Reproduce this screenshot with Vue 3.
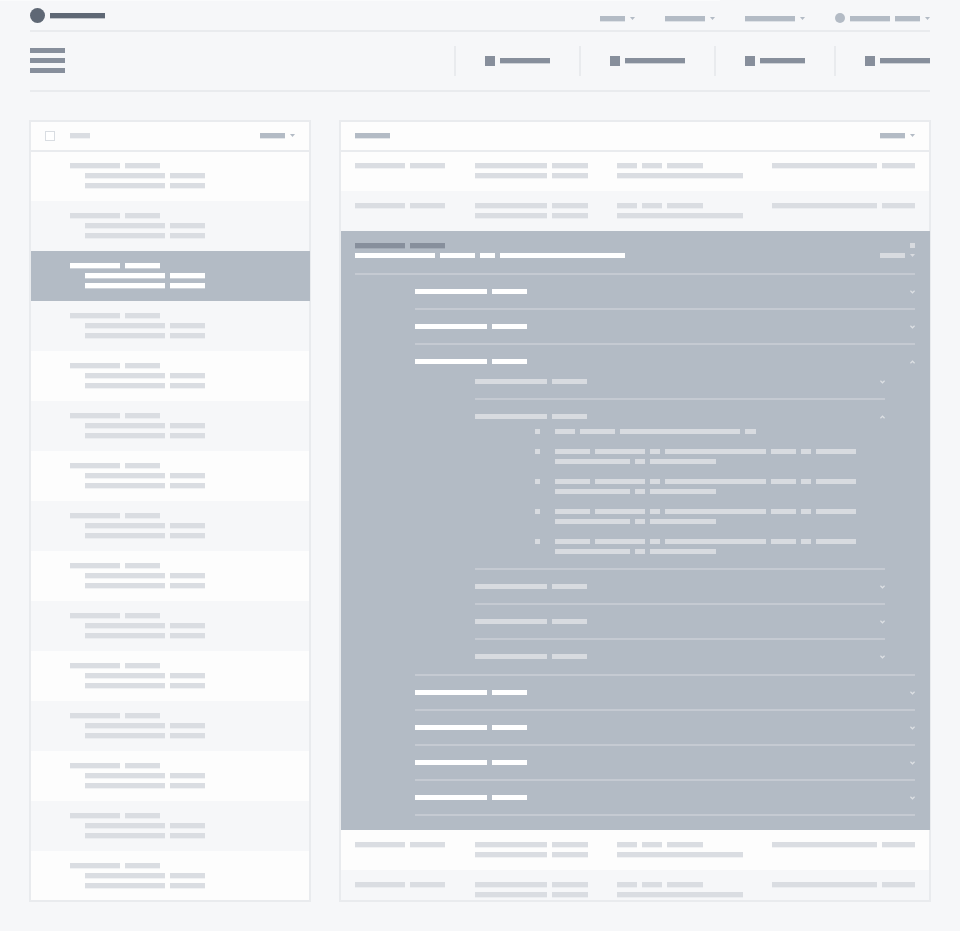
<script setup>
const topMenus = [[25], [40], [50]]
const navItems = [50, 60, 45, 50]
const leftRows = Array.from({ length: 15 }, (_, i) => i)
const tableCols = [
  [[50.33, 35]],
  [[72, 35.33], [72, 35.33]],
  [[20, 20, 35.33], [125.33]],
  [[105, 32.67]]
]
const level2 = Array.from({ length: 7 }, (_, i) => i)
const level3 = [0, 1, 2, 3, 4]
const bulletLines = [
  [[20.33, 35, 120, 10.33]],
  [[35.33, 50, 10, 100.33, 25, 10, 40], [75.33, 10, 65.33]],
  [[35.33, 50, 10, 100.33, 25, 10, 40], [75.33, 10, 65.33]],
  [[35.33, 50, 10, 100.33, 25, 10, 40], [75.33, 10, 65.33]],
  [[35.33, 50, 10, 100.33, 25, 10, 40], [75.33, 10, 65.33]]
]
</script>

<template>
  <div class="page">
    <div class="progress"></div>

    <header class="top">
      <div class="brand">
        <span class="logo"></span>
        <span class="bar dark brand-name"></span>
      </div>
      <div class="menus">
        <div v-for="(m, i) in topMenus" :key="i" class="menu">
          <span class="bar mid" :style="{ width: m[0] + 'px' }"></span>
          <svg class="caret" width="5" height="3" viewBox="0 0 5 3"><polygon points="0,0 5,0 2.5,3" /></svg>
        </div>
        <div class="menu user">
          <span class="avatar"></span>
          <span class="bar mid w40"></span>
          <span class="bar mid w25"></span>
          <svg class="caret" width="5" height="3" viewBox="0 0 5 3"><polygon points="0,0 5,0 2.5,3" /></svg>
        </div>
      </div>
    </header>

    <nav class="nav">
      <div class="burger">
        <span></span><span></span><span></span>
      </div>
      <div class="nav-items">
        <div v-for="(w, i) in navItems" :key="i" class="nav-item">
          <span class="square"></span>
          <span class="bar steel" :style="{ width: w + 'px' }"></span>
        </div>
      </div>
    </nav>

    <main class="panels">
      <section class="panel left">
        <div class="panel-head">
          <div class="head-side">
            <span class="checkbox"></span>
            <span class="bar light w20 ml15"></span>
          </div>
          <div class="head-sort">
            <span class="bar mid w25"></span>
            <svg class="caret" width="5" height="3" viewBox="0 0 5 3"><polygon points="0,0 5,0 2.5,3" /></svg>
          </div>
        </div>
        <div class="rows">
          <div
            v-for="r in leftRows"
            :key="r"
            class="left-row"
            :class="{ alt: r % 2 === 1, selected: r === 2 }"
          >
            <div class="line">
              <span class="bar tint w50"></span>
              <span class="bar tint w35"></span>
            </div>
            <div class="line indent">
              <span class="bar tint w80"></span>
              <span class="bar tint w35"></span>
            </div>
            <div class="line indent">
              <span class="bar tint w80"></span>
              <span class="bar tint w35"></span>
            </div>
          </div>
        </div>
      </section>

      <section class="panel right">
        <div class="panel-head">
          <span class="bar mid w35"></span>
          <div class="head-sort">
            <span class="bar mid w25"></span>
            <svg class="caret" width="5" height="3" viewBox="0 0 5 3"><polygon points="0,0 5,0 2.5,3" /></svg>
          </div>
        </div>
        <div class="rows">
          <div v-for="n in 2" :key="'a' + n" class="table-row" :class="{ alt: n === 2 }">
            <div v-for="(col, c) in tableCols" :key="c" class="cell">
              <div v-for="(line, l) in col" :key="l" class="line">
                <span v-for="(w, b) in line" :key="b" class="bar tint" :style="{ width: w + 'px' }"></span>
              </div>
            </div>
          </div>

          <div class="detail">
            <div class="detail-head">
              <div class="detail-title">
                <div class="line">
                  <span class="bar steel w50"></span>
                  <span class="bar steel w35"></span>
                </div>
                <div class="line">
                  <span class="flat white w80"></span>
                  <span class="flat white w35"></span>
                  <span class="flat white w15"></span>
                  <span class="flat white w125"></span>
                </div>
              </div>
              <div class="detail-side">
                <span class="flat pale dot"></span>
                <div class="head-sort">
                  <span class="flat pale w25"></span>
                  <svg class="caret pale-caret" width="5" height="3" viewBox="0 0 5 3"><polygon points="0,0 5,0 2.5,3" /></svg>
                </div>
              </div>
            </div>

            <div v-for="a in level2" :key="a" class="l2">
              <div class="acc-title">
                <span class="flat white w72"></span>
                <span class="flat white w35"></span>
                <svg class="chev" :class="{ up: a === 2 }" width="5" height="4" viewBox="0 0 5 4">
                  <polyline points="0.4,0.8 2.5,2.8 4.6,0.8" />
                </svg>
              </div>

              <div v-if="a === 2" class="l3-list">
                <div v-for="b in level3" :key="b" class="l3">
                  <div class="acc-title">
                    <span class="flat pale w72"></span>
                    <span class="flat pale w35"></span>
                    <svg class="chev" :class="{ up: b === 1 }" width="5" height="4" viewBox="0 0 5 4">
                      <polyline points="0.4,0.8 2.5,2.8 4.6,0.8" />
                    </svg>
                  </div>
                  <div v-if="b === 1" class="bullets">
                    <div v-for="(lines, k) in bulletLines" :key="k" class="bullet">
                      <span class="flat pale dot"></span>
                      <div class="bullet-body">
                        <div v-for="(line, l) in lines" :key="l" class="line">
                          <span v-for="(w, j) in line" :key="j" class="flat pale" :style="{ width: w + 'px' }"></span>
                        </div>
                      </div>
                    </div>
                  </div>
                </div>
              </div>
            </div>
          </div>

          <div v-for="n in 2" :key="'b' + n" class="table-row" :class="{ alt: n === 2 }">
            <div v-for="(col, c) in tableCols" :key="c" class="cell">
              <div v-for="(line, l) in col" :key="l" class="line">
                <span v-for="(w, b) in line" :key="b" class="bar tint" :style="{ width: w + 'px' }"></span>
              </div>
            </div>
          </div>
        </div>
      </section>
    </main>
  </div>
</template>

<style>
html, body {
  margin: 0;
  background: #f6f7f9;
}
</style>

<style scoped>
.page {
  position: relative;
  height: 931px;
  overflow: hidden;
  background: #f6f7f9;
}
.progress {
  position: absolute;
  top: 0;
  left: 0;
  width: 720px;
  height: 1px;
  background: #fafbfc;
}

/* skeleton bars */
.bar, .flat {
  display: block;
  flex: none;
  height: 5px;
}
.bar {
  background: var(--c);
  position: relative;
}
.bar::after {
  content: "";
  position: absolute;
  left: 0;
  right: 0;
  top: 5px;
  height: 1px;
  background: var(--c);
  opacity: 0.35;
}
.flat { background: var(--c); }
.dark { --c: #5f6875; }
.steel { --c: #878f9c; }
.mid { --c: #b3bbc5; }
.light { --c: #dadde2; }
.tint { --c: #dadde2; }
.pale { --c: #d8dbe0; }
.white { --c: #ffffff; }
.w15 { width: 15px; }
.w20 { width: 20px; }
.w25 { width: 25px; }
.w35 { width: 35px; }
.w40 { width: 40px; }
.w50 { width: 50px; }
.w72 { width: 72px; }
.w80 { width: 80px; }
.w125 { width: 125px; }
.ml15 { margin-left: 15px; }

.line {
  display: flex;
  gap: 5px;
  height: 10px;
}
.caret {
  display: block;
  flex: none;
  margin-top: 1px;
  fill: #b3bbc5;
}
.pale-caret { fill: #d8dbe0; }

/* top bar */
.top {
  display: flex;
  justify-content: space-between;
  height: 30px;
  margin: 0 30px;
  border-bottom: 2px solid #e9ebee;
}
.brand {
  display: flex;
  gap: 5px;
  padding-top: 8px;
}
.logo {
  width: 15px;
  height: 15px;
  border-radius: 50%;
  background: #5f6875;
}
.brand-name {
  width: 55px;
  margin-top: 5px;
}
.menus {
  display: flex;
  gap: 30px;
  padding-top: 16px;
}
.menu {
  display: flex;
  gap: 5px;
}
.avatar {
  width: 10px;
  height: 10px;
  margin-top: -3px;
  border-radius: 50%;
  background: #b3bbc5;
}

/* nav */
.nav {
  display: flex;
  align-items: flex-start;
  height: 58px;
  margin: 0 30px;
  overflow: hidden;
  border-bottom: 2px solid #e9ebee;
}
.burger {
  display: flex;
  flex: none;
  flex-direction: column;
  gap: 5px;
  padding-top: 16px;
}
.burger span {
  width: 35px;
  height: 5px;
  background: #878f9c;
}
.nav-items {
  display: flex;
  flex: none;
  margin: 14px 0 0 389px;
}
.nav-item {
  display: flex;
  flex: none;
  gap: 5px;
  align-items: flex-start;
  height: 30px;
  padding: 0 29px;
  border-left: 2px solid #e9ebee;
}
.square {
  width: 10px;
  height: 10px;
  margin-top: 10px;
  background: #878f9c;
}
.nav-item .bar { margin-top: 12px; }

/* panels */
.panels {
  display: flex;
  gap: 30px;
  margin: 29px 30px 0;
}
.panel {
  box-sizing: border-box;
  height: 780px;
  overflow: clip;
  overflow-clip-margin: 1px;
  border: 1px solid #e9ebee;
  box-shadow: 0 0 0 1px #e9ebee;
  background: #fdfdfd;
}
.panel.left { width: 280px; flex: none; }
.panel.right { flex: 1; min-width: 0; }
.panel-head {
  position: relative;
  z-index: 1;
  display: flex;
  justify-content: space-between;
  height: 17px;
  padding: 11px 14px 0;
  border-bottom: 2px solid #e9ebee;
  background: #fdfdfd;
}
.head-side { display: flex; }
.checkbox {
  box-sizing: border-box;
  width: 10px;
  height: 10px;
  margin-top: -2px;
  border: 1px solid #d9dde2;
  background: #fff;
}
.head-sort {
  display: flex;
  gap: 5px;
}
.rows {
  height: 749px;
  margin-top: -1px;
  overflow-y: clip;
}

/* left list */
.left-row {
  box-sizing: border-box;
  height: 50px;
  padding: 12px 0 0 39px;
}
.alt { background: #f6f7f9; }
.selected {
  margin-right: -1px;
  background: #b3bbc5;
}
.selected .tint { --c: #ffffff; }
.indent { margin-left: 15px; }

/* table */
.table-row {
  box-sizing: border-box;
  display: grid;
  grid-template-columns: 120.33px 142px 155px 1fr;
  height: 40px;
  padding: 12px 14px 0;
}
.detail {
  box-sizing: border-box;
  height: 599px;
  margin-right: -1px;
  padding: 12px 15px 0 14px;
  background: #b3bbc5;
}
.detail-head {
  display: flex;
  justify-content: space-between;
  height: 30px;
  border-bottom: 2px solid #c5cad2;
}
.detail-side {
  display: flex;
  flex-direction: column;
  align-items: flex-end;
  gap: 5px;
}
.dot { width: 5px; }

/* accordions */
.l2 {
  margin-left: 60px;
  padding: 14px 0;
  border-bottom: 2px solid #c5cad2;
}
.acc-title {
  display: flex;
  gap: 5px;
}
.chev {
  display: block;
  flex: none;
  margin-left: auto;
  margin-top: 1px;
  fill: none;
  stroke: #dde0e4;
  stroke-width: 1.2;
}
.chev.up { transform: scaleY(-1); }
.l3-list {
  margin: 15px 30px -14px 60px;
  padding-bottom: 15px;
}
.l3 {
  padding: 14px 0;
  border-bottom: 2px solid #c5cad2;
}
.l3:first-child { padding-top: 0; }
.l3:last-child {
  padding-bottom: 0;
  border-bottom: 0;
}
.bullets {
  display: flex;
  flex-direction: column;
  gap: 15px;
  margin-top: 10px;
}
.bullet {
  display: flex;
  gap: 15px;
  padding-left: 60px;
}
.bullet-body { flex: 1; }
.bullet-body .line:last-child { height: 5px; }
</style>
